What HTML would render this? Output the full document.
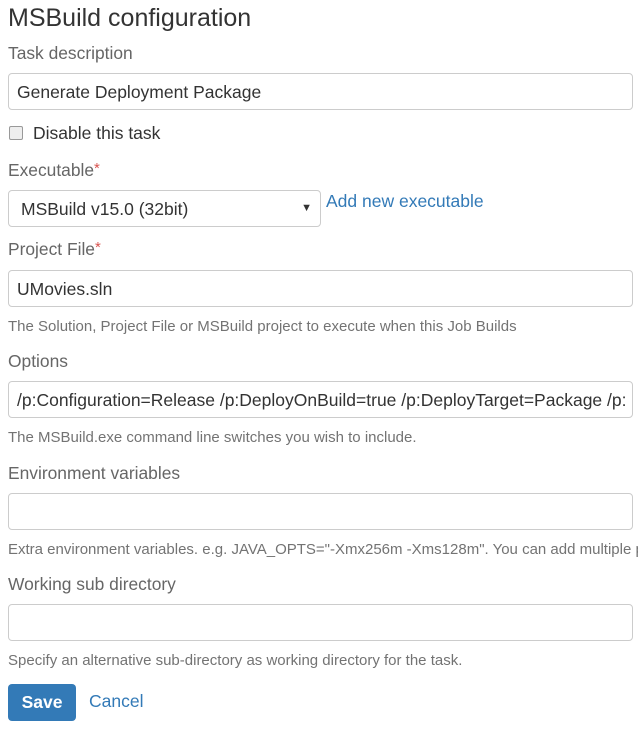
<!DOCTYPE html>
<html><head><style>
body{margin:0;width:638px;height:733px;overflow:hidden;background:#fff;font-family:"Liberation Sans",sans-serif;position:relative}
.a{position:absolute;white-space:nowrap}
h1{position:absolute;left:8px;top:4px;margin:0;font-size:25px;font-weight:normal;color:#333}
.l{font-size:17.4px;color:#666}
.in{position:absolute;left:8px;width:625px;height:37px;border:1px solid #ccc;border-radius:4px;box-sizing:border-box;font-size:17.5px;color:#333;padding:8px 8px;overflow:hidden;white-space:nowrap}
.h{font-size:15px;color:#737373}
.r{color:#d9534f;font-size:15px;vertical-align:top}
</style></head><body>
<h1>MSBuild configuration</h1>
<div class="a l" style="left:8px;top:43px">Task description</div>
<div class="in" style="top:73px">Generate Deployment Package</div>
<div class="a" style="left:9px;top:126px;width:12px;height:12px;border:1px solid #999;border-radius:2px;background:#eee"></div>
<div class="a" style="left:33px;top:123px;font-size:17.5px;color:#333">Disable this task</div>
<div class="a l" style="left:8px;top:160px">Executable<span class="r">*</span></div>
<div class="in" style="top:190px;width:313px;padding-left:12px">MSBuild v15.0 (32bit)<span style="position:absolute;right:8px;top:11px;font-size:11px">▼</span></div>
<div class="a" style="left:326px;top:191px;font-size:17.5px;color:#337ab7">Add new executable</div>
<div class="a l" style="left:8px;top:239px">Project File<span class="r">*</span></div>
<div class="in" style="top:270px">UMovies.sln</div>
<div class="a h" style="left:8px;top:318px">The Solution, Project File or MSBuild project to execute when this Job Builds</div>
<div class="a l" style="left:8px;top:351px">Options</div>
<div class="in" style="top:381px">/p:Configuration=Release /p:DeployOnBuild=true /p:DeployTarget=Package /p:</div>
<div class="a h" style="left:8px;top:429px">The MSBuild.exe command line switches you wish to include.</div>
<div class="a l" style="left:8px;top:463px">Environment variables</div>
<div class="in" style="top:493px"></div>
<div class="a h" style="left:8px;top:541px">Extra environment variables. e.g. JAVA_OPTS="-Xmx256m -Xms128m". You can add multiple p</div>
<div class="a l" style="left:8px;top:574px">Working sub directory</div>
<div class="in" style="top:604px"></div>
<div class="a h" style="left:8px;top:652px">Specify an alternative sub-directory as working directory for the task.</div>
<div class="a" style="left:8px;top:684px;width:68px;height:37px;background:#337ab7;border-radius:4px;color:#fff;font-weight:bold;font-size:17.5px;text-align:center;line-height:37px">Save</div>
<div class="a" style="left:89px;top:691px;font-size:17.5px;color:#337ab7">Cancel</div>
</body></html>
